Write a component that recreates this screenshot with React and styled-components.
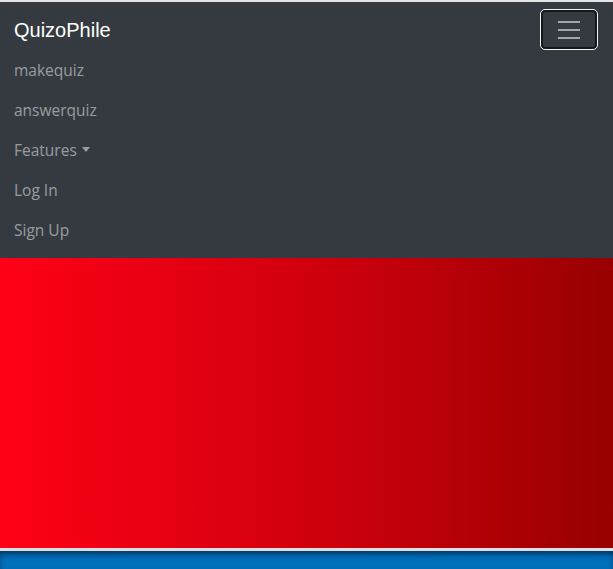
import React from "react";
import styled, { createGlobalStyle } from "styled-components";

const Global = createGlobalStyle`
  html, body { margin: 0; padding: 0; background: #e4e4e4; }
  body { font-family: "Open Sans", "Noto Sans", sans-serif; }
  * { box-sizing: border-box; }
`;

const Page = styled.div`
  padding-top: 2px;
  display: flex;
  flex-direction: column;
`;

const Navbar = styled.nav`
  background: #343a40;
  padding: 8px 16px;
  display: flex;
  flex-direction: column;
`;

const TopRow = styled.div`
  height: 40px;
  display: flex;
  align-items: center;
  justify-content: space-between;
`;

const Brand = styled.a`
  font-family: "Liberation Sans", Arial, sans-serif;
  font-size: 20px;
  line-height: 30px;
  padding: 5px 0;
  margin-left: -2px;
  color: #fff;
  text-decoration: none;
`;

const Toggler = styled.button`
  width: 58px;
  height: 41px;
  margin: -1px -1px 0 0;
  padding: 0;
  background: transparent;
  border: 1px solid #f4f4f4;
  border-radius: 5px;
  box-shadow: inset 0 0 0 2px #15171a;
  display: flex;
  align-items: center;
  justify-content: center;
`;

const NavList = styled.ul`
  list-style: none;
  margin: 0;
  padding: 0;
  display: flex;
  flex-direction: column;
`;

const NavLink = styled.a`
  display: block;
  padding: 8px 0 8px 0;
  margin-left: -2px;
  font-size: 15.5px;
  line-height: 24px;
  color: rgba(255, 255, 255, 0.5);
  text-decoration: none;
`;

const Caret = styled.span`
  display: inline-block;
  margin-left: 5px;
  vertical-align: 4px;
  border-top: 5px solid rgba(255, 255, 255, 0.5);
  border-left: 4.5px solid transparent;
  border-right: 4.5px solid transparent;
`;

const Hero = styled.section`
  height: 290px;
  background: linear-gradient(to right, #ff0018 0%, #cc000c 55%, #980000 100%);
`;

const Divider = styled.div`
  height: 3px;
  background: #dedede;
`;

const Footer = styled.footer`
  height: 18px;
  background: #0071bd;
  box-shadow: inset 0 4px 6px -1px rgba(0, 30, 60, 0.75);
`;

export default function App() {
  return (
    <>
      <Global />
      <Page>
        <Navbar>
          <TopRow>
            <Brand href="#">QuizoPhile</Brand>
            <Toggler aria-label="Toggle navigation">
              <svg width="30" height="30" viewBox="0 0 30 30">
                <path
                  d="M4 7h22M4 15h22M4 23h22"
                  stroke="rgba(255,255,255,0.55)"
                  strokeWidth="2"
                />
              </svg>
            </Toggler>
          </TopRow>
          <NavList>
            <li><NavLink href="#">makequiz</NavLink></li>
            <li><NavLink href="#">answerquiz</NavLink></li>
            <li>
              <NavLink href="#">
                Features<Caret />
              </NavLink>
            </li>
            <li><NavLink href="#">Log In</NavLink></li>
            <li><NavLink href="#">Sign Up</NavLink></li>
          </NavList>
        </Navbar>
        <Hero />
        <Divider />
        <Footer />
      </Page>
    </>
  );
}
